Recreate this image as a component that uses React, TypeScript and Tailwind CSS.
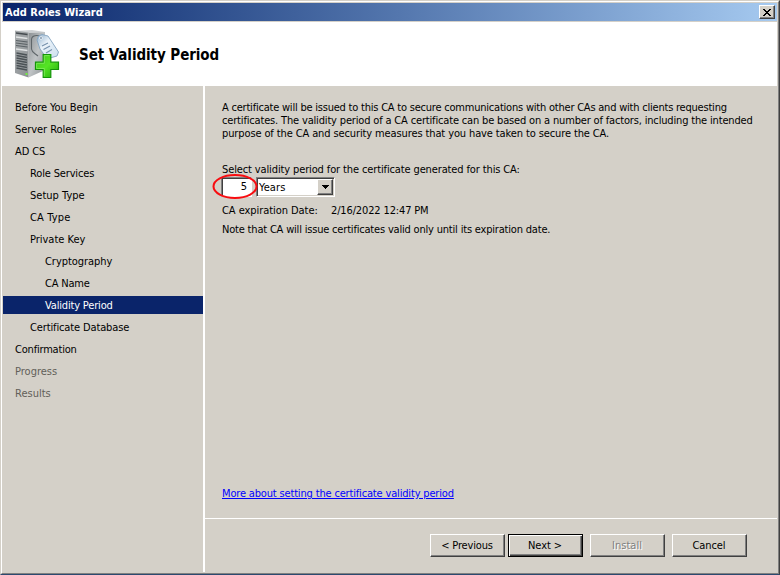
import React from 'react';

const steps = [
  { label: 'Before You Begin', indent: 'pl-[12px]', spacing: 'tracking-[-0.06px]' },
  { label: 'Server Roles', indent: 'pl-[12px]', spacing: 'tracking-[-0.06px]' },
  { label: 'AD CS', indent: 'pl-[12px]', spacing: 'tracking-[-0.1px]' },
  { label: 'Role Services', indent: 'pl-[27px]', spacing: 'tracking-[-0.15px]' },
  { label: 'Setup Type', indent: 'pl-[27px]', spacing: 'tracking-[0.02px]' },
  { label: 'CA Type', indent: 'pl-[27px]', spacing: 'tracking-[0.15px]' },
  { label: 'Private Key', indent: 'pl-[27px]', spacing: 'tracking-[-0.02px]' },
  { label: 'Cryptography', indent: 'pl-[42px]', spacing: 'tracking-[-0.04px]' },
  { label: 'CA Name', indent: 'pl-[42px]', spacing: 'tracking-[-0.2px]' },
  { label: 'Validity Period', indent: 'pl-[42px]', spacing: 'tracking-[-0.17px]', active: true },
  { label: 'Certificate Database', indent: 'pl-[27px]', spacing: 'tracking-[-0.13px]' },
  { label: 'Confirmation', indent: 'pl-[12px]', spacing: 'tracking-[-0.2px]' },
  { label: 'Progress', indent: 'pl-[12px]', spacing: 'tracking-[0px]', muted: true },
  { label: 'Results', indent: 'pl-[12px]', spacing: 'tracking-[0px]', muted: true },
];

function ServerIcon() {
  return (
    <svg width="48" height="50" viewBox="0 0 48 50" className="block">
      <defs>
        <linearGradient id="front" x1="0" x2="1" y1="0" y2="1">
          <stop offset="0" stopColor="#a9adaf" />
          <stop offset="1" stopColor="#8b9093" />
        </linearGradient>
        <linearGradient id="side" x1="0" x2="1" y1="0" y2="1">
          <stop offset="0" stopColor="#8b9093" />
          <stop offset=".5" stopColor="#c0c4c6" />
          <stop offset="1" stopColor="#8b9093" />
        </linearGradient>
        <linearGradient id="plus" x1="0" x2="1" y1="0" y2="1">
          <stop offset="0" stopColor="#3fc41c" />
          <stop offset=".5" stopColor="#55e425" />
          <stop offset="1" stopColor="#1fa80a" />
        </linearGradient>
        <linearGradient id="tag" x1="0" x2="1" y1="0" y2="1">
          <stop offset="0" stopColor="#8fafcb" />
          <stop offset=".4" stopColor="#eaf2f9" />
          <stop offset="1" stopColor="#cbdeee" />
        </linearGradient>
      </defs>
      <path d="M0 2 17 1 30 3 14 4Z" fill="#cdd0d2" />
      <path d="M13.500 4 30 3 30 41 13.500 48.500Z" fill="url(#side)" />
      <path d="M0 1.500 13.500 3.500 13.500 48.500 0 44Z" fill="url(#front)" />
      <path d="M1 4 12.500 5.500" stroke="#454b4f" strokeWidth="1.4" />
      <path d="M1 11.500 12.500 13M1 14 12.500 15.500M1 16.500 12.500 18" stroke="#5a6165" strokeWidth="1.1" />
      <path d="M1 8 12.500 9.500M1 20 12.500 21.500" stroke="#e0e3e4" strokeWidth="1.6" />
      <path d="M1.500 24 12 26M1.500 26.500 12 28.500M1.500 29 12 31M1.500 31.500 12 33.500M1.500 34 12 36M1.500 36.500 12 38.500M1.500 39 12 41" stroke="#4b5256" strokeWidth="1.3" />
      <rect x="10.5" y="44" width="2" height="2" fill="#72ed42" />
      <path d="M27 8C20 5 16 7 16.500 12L16.500 20C17 24 20 24 23 27" fill="none" stroke="#5f666a" strokeWidth="1.1" />
      <path d="M22 11 23.500 7 27 5.500 33 7 43.500 23 42 27 35 29 31 28 25 20Z" fill="url(#tag)" stroke="#84a4bf" strokeWidth=".9" />
      <circle cx="26" cy="9" r="1.4" fill="#5f7d99" stroke="#fff" strokeWidth=".8" />
      <path d="M27 17 33 14M28.500 20.500 35 17M31 24 37 20.500" stroke="#7590ac" strokeWidth="1.1" />
      <path d="M28.200 25.500H35.800V33.200H43.500V40.500H35.800V48.500H28.200V40.500H20.500V33.200H28.200Z" fill="url(#plus)" stroke="#139508" strokeWidth="1.2" />
      <path d="M29.300 47.300V39.500H21.600V34.300H29.300V26.600H34.500" fill="none" stroke="#8bee69" strokeWidth=".7" />
    </svg>
  );
}

function WizardButton({ label, className = '', textClass = '' }: { label: string; className?: string; textClass?: string }) {
  return (
    <button className={`flex h-[23px] w-[75px] items-center justify-center border border-t-white border-l-white border-r-[#404040] border-b-[#404040] bg-[#d4d0c8] pr-px ${className}`}>
      <span className={textClass}>{label}</span>
    </button>
  );
}

export default function App() {
  return (
    <div className="flex h-[575px] w-[780px] flex-col overflow-hidden border-t border-r border-b border-l border-t-[#d4d0c8] border-l-[#d4d0c8] border-r-[#404040] border-b-[#2b4a70] bg-[#d4d0c8] font-['DejaVu_Sans_Condensed','DejaVu_Sans',sans-serif] text-[11px] leading-[13px] text-black [font-stretch:condensed]">
      <div className="flex min-h-0 flex-1 flex-col border border-t-white border-r-[#808080] border-b-[#808080] border-l-white">
        <header className="mt-px mr-px ml-px flex h-[18px] shrink-0 items-center justify-between bg-linear-to-r from-[#0a246a] to-[#a6caf0] pr-[2px] pl-[2px]">
          <span className="font-bold whitespace-nowrap text-white">Add Roles Wizard</span>
          <button className="flex h-[14px] w-4 items-center justify-center border border-t-white border-l-white border-r-[#404040] border-b-[#404040] bg-[#d4d0c8] shadow-[inset_-1px_-1px_0_#808080]">
            <svg width="8" height="7" viewBox="0 0 8 7" shapeRendering="crispEdges"><path d="M0 0h2v1h1v1h2v-1h1v-1h2v1h-1v1h-1v1h-1v1h1v1h1v1h1v1h-2v-1h-1v-1h-2v1h-1v1h-2v-1h1v-1h1v-1h1v-1h-1v-1h-1v-1h-1z" /></svg>
          </button>
        </header>
        <section className="mt-px mr-px flex h-16 shrink-0 bg-white">
          <div className="mt-[7px] ml-[13px] w-12"><ServerIcon /></div>
          <h1 className="mt-[24px] ml-[16px] text-[15px] leading-[18px] font-bold tracking-[-0.07px] whitespace-nowrap">Set Validity Period</h1>
        </section>
        <div className="mb-px flex min-h-0 flex-1">
          <nav className="w-[203px] shrink-0 border-r-2 border-white pt-[10px] pl-px">
            {steps.map((s) => (
              <div key={s.label} className={`flex h-[22px] items-center ${s.indent} ${s.active ? 'bg-[linear-gradient(#0a246a,#0a246a)] bg-[length:100%_18px] bg-[position:0_2px] bg-no-repeat text-white' : ''} ${s.muted ? 'text-[#625f59]' : ''}`}>
                <span className={`whitespace-nowrap ${s.spacing}`}>{s.label}</span>
              </div>
            ))}
          </nav>
          <main className="flex min-w-0 flex-1 flex-col">
            <div className="flex flex-1 flex-col items-start pt-[15px] pl-[17px] whitespace-nowrap">
              <p className="tracking-[-0.215px]">A certificate will be issued to this CA to secure communications with other CAs and with clients requesting</p>
              <p className="tracking-[-0.165px]">certificates. The validity period of a CA certificate can be based on a number of factors, including the intended</p>
              <p className="tracking-[-0.115px]">purpose of the CA and security measures that you have taken to secure the CA.</p>
              <label className="mt-[23px] tracking-[-0.125px]">Select validity period for the certificate generated for this CA:</label>
              <div className="relative mt-px -ml-px flex h-5">
                <div className="mr-[4px] flex h-5 w-[31px] items-center justify-end border border-t-[#808080] border-l-[#808080] border-r-white border-b-white bg-white pr-[4px] pb-px shadow-[inset_1px_1px_0_#404040]">5</div>
                <div className="flex h-5 w-[79px] items-center border border-t-[#808080] border-l-[#808080] border-r-white border-b-white bg-white pr-px pl-[2px] shadow-[inset_1px_1px_0_#404040,inset_-1px_-1px_0_#d4d0c8]">
                  <span className="flex-1 tracking-[0.1px]">Years</span>
                  <span className="flex h-4 w-4 items-center justify-center border border-t-white border-l-white border-r-[#404040] border-b-[#404040] bg-[#d4d0c8] shadow-[inset_-1px_-1px_0_#808080]">
                    <svg width="7" height="4" viewBox="0 0 7 4" shapeRendering="crispEdges"><path d="M0 0h7v1h-1v1h-1v1h-1v1h-1v-1h-1v-1h-1v-1h-1z" /></svg>
                  </span>
                </div>
                <svg className="absolute -top-[4px] -left-[10px]" width="48" height="27"><ellipse cx="24" cy="13.500" rx="21.500" ry="11.400" fill="none" stroke="#f80c10" strokeWidth="2" /></svg>
              </div>
              <div className="mt-[7px] flex"><span className="w-[109px] tracking-[-0.06px]">CA expiration Date:</span><span className="tracking-[-0.14px]">2/16/2022 12:47 PM</span></div>
              <p className="mt-[6px] tracking-[-0.19px]">Note that CA will issue certificates valid only until its expiration date.</p>
              <a className="mt-auto mb-[18px] tracking-[-0.165px] text-[#0000ff] underline">More about setting the certificate validity period</a>
            </div>
            <footer className="mr-px flex h-[54px] shrink-0 items-start justify-end border-t border-white pt-[15px] pr-[30px]">
              <WizardButton label="< Previous" className="shadow-[inset_-1px_-1px_0_#808080]" textClass="tracking-[-0.15px]" />
              <WizardButton label="Next >" className="ml-[3px] shadow-[inset_1px_1px_0_white,inset_-1px_-1px_0_#404040,inset_-2px_-2px_0_#808080] outline-1 -outline-offset-1 outline-black" textClass="tracking-[-0.1px]" />
              <WizardButton label="Install" className="ml-[7px] shadow-[inset_-1px_-1px_0_#808080]" textClass="text-[#808080] [text-shadow:1px_1px_0_white]" />
              <WizardButton label="Cancel" className="ml-[7px] shadow-[inset_-1px_-1px_0_#808080]" textClass="tracking-[-0.1px]" />
            </footer>
          </main>
        </div>
      </div>
    </div>
  );
}
